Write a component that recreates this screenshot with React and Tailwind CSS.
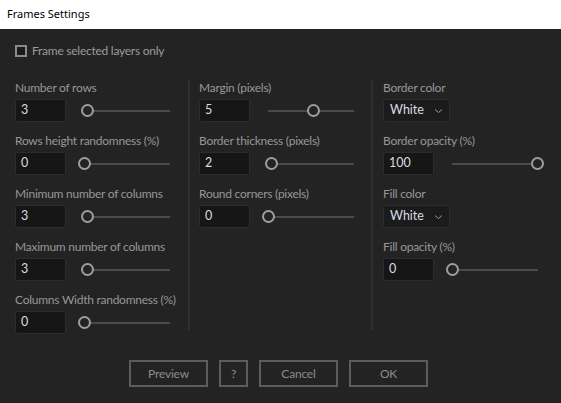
import React from 'react';

const font = { fontFamily: 'Lato, "Noto Sans", sans-serif' };

const Slider = ({ pos }) => (
  <div className="relative ml-[12px] h-[23px] w-[98px]">
    <div className="absolute left-[6px] right-[6px] top-[11px] h-[2px] bg-[#4a4a4a]" />
    <div
      className="absolute top-[5px] h-[13px] w-[13px] rounded-full border-2 border-[#9e9e9e] bg-[#232323]"
      style={{ left: pos }}
    />
  </div>
);

const Label = ({ children }) => (
  <div className="h-[16px] whitespace-nowrap text-[12px] leading-[16px] tracking-[-0.25px] text-[#979797]">
    {children}
  </div>
);

const NumberField = ({ label, value, pos }) => (
  <div className="mb-[11px]">
    <Label>{label}</Label>
    <div className="mt-[3px] flex items-center">
      <div className="flex h-[23px] w-[51px] items-center rounded-[2px] border border-[#2c2c2c] bg-[#161616] pl-[5px] text-[12.5px] text-[#d6dbe2]">
        {value}
      </div>
      <Slider pos={pos} />
    </div>
  </div>
);

const SelectField = ({ label, value }) => (
  <div className="mb-[11px]">
    <Label>{label}</Label>
    <div className="mt-[3px] flex h-[23px] w-[67px] items-center justify-between rounded-[2px] border border-[#2c2c2c] bg-[#1b1b1b] pl-[6px] pr-[6px] text-[12.5px] text-[#d8dde3]">
      <span>{value}</span>
      <svg width="9" height="6" viewBox="0 0 9 6" fill="none">
        <path d="M1 1.5 L4.5 4.5 L8 1.5" stroke="#9a9a9a" strokeWidth="1" />
      </svg>
    </div>
  </div>
);

const Button = ({ children, w = 'w-[79px]' }) => (
  <button className={`${w} h-[27px] border-2 border-[#5c5c5c] bg-[#232323] text-[12px] tracking-[-0.2px] text-[#8c8c8c]`}>
    {children}
  </button>
);

export default function App() {
  return (
    <div className="flex h-[403px] w-[561px] flex-col bg-[#232323]" style={font}>
      <div
        className="flex h-[29px] items-center bg-white pl-[7px] text-[11px] text-black"
        style={{ fontFamily: '"Noto Sans", sans-serif' }}
      >
        Frames Settings
      </div>

      <div className="flex items-center pl-[15px] pt-[16px]">
        <div className="h-[12px] w-[12px] border-2 border-[#8a8a8a] bg-[#1a1a1a]" />
        <span className="ml-[5px] text-[12px] leading-[12px] tracking-[-0.25px] text-[#9c9c9c]">
          Frame selected layers only
        </span>
      </div>

      <div className="mt-[23px] flex items-start pl-[15px]">
        <div className="w-[173px]">
          <NumberField label="Number of rows" value="3" pos={3} />
          <NumberField label="Rows height randomness (%)" value="0" pos={0} />
          <NumberField label="Minimum number of columns" value="3" pos={3} />
          <NumberField label="Maximum number of columns" value="3" pos={3} />
          <NumberField label="Columns Width randomness (%)" value="0" pos={0} />
        </div>
        <div className="h-[250px] w-[2px] bg-[#303030]" />
        <div className="w-[181px] pl-[9px]">
          <NumberField label="Margin (pixels)" value="5" pos={45} />
          <NumberField label="Border thickness (pixels)" value="2" pos={3} />
          <NumberField label="Round corners (pixels)" value="0" pos={0} />
        </div>
        <div className="h-[250px] w-[2px] bg-[#303030]" />
        <div className="pl-[10px]">
          <SelectField label="Border color" value="White" />
          <NumberField label="Border opacity (%)" value="100" pos={85} />
          <SelectField label="Fill color" value="White" />
          <NumberField label="Fill opacity (%)" value="0" pos={0} />
        </div>
      </div>

      <div className="mt-auto mb-[16px] flex gap-[11px] pl-[129px]">
        <Button>Preview</Button>
        <Button w="w-[29px]">?</Button>
        <Button>Cancel</Button>
        <Button>OK</Button>
      </div>
    </div>
  );
}
